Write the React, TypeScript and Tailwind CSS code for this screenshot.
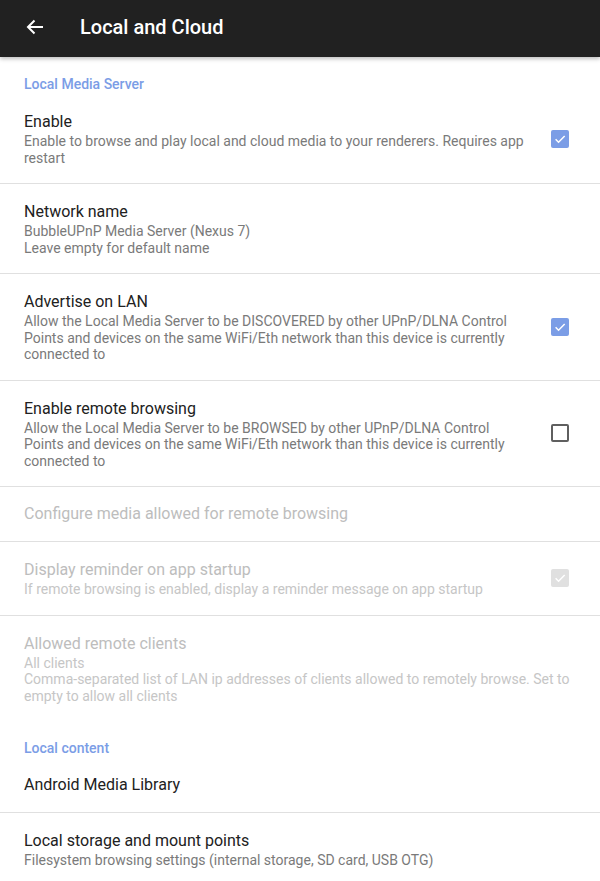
import React from 'react';

type Item = {
  title: string;
  lines?: string[];
  check?: 'on' | 'off';
  disabled?: boolean;
  divider?: boolean;
};

const Check = ({ state, disabled }: { state: 'on' | 'off'; disabled?: boolean }) => {
  if (state === 'off') {
    return <div className="w-[18px] h-[18px] rounded-[2px] border-2 border-[#5f5f5f]" />;
  }
  return (
    <div
      className={`w-[18px] h-[18px] rounded-[2px] flex items-center justify-center ${
        disabled ? 'bg-[#e0e0e0]' : 'bg-[#7b9de6]'
      }`}
    >
      <svg width="14" height="14" viewBox="0 0 24 24" fill="none">
        <path d="M4.5 12.5l5 5L20 7" stroke="white" strokeWidth="2.6" />
      </svg>
    </div>
  );
};

const Row = ({ item }: { item: Item }) => {
  const single = !item.lines;
  return (
    <div
      className={`flex items-center pl-6 ${item.check ? 'pr-[31px]' : 'pr-5'} ${single ? 'py-4' : 'py-[17px]'} ${
        item.divider ? 'border-b border-[#e0e0e0]' : ''
      }`}
    >
      <div className="flex-1 min-w-0">
        <div
          className={`text-[16px] leading-[22px] ${item.disabled ? 'text-[#bdbdbd]' : 'text-[#212121]'}`}
        >
          {item.title}
        </div>
        {item.lines?.map((l, i) => (
          <div
            key={i}
            className={`text-[14px] leading-[16.5px] ${item.disabled ? 'text-[#c6c6c6]' : 'text-[#7a7a7a]'}`}
          >
            {l}
          </div>
        ))}
      </div>
      {item.check && (
        <div className="ml-6 shrink-0">
          <Check state={item.check} disabled={item.disabled} />
        </div>
      )}
    </div>
  );
};

const Section = ({ label }: { label: string }) => (
  <div className="pl-6 pt-[17px] text-[14px] leading-[20px] font-medium text-[#7b9de6]">{label}</div>
);

const serverItems: Item[] = [
  {
    title: 'Enable',
    lines: ['Enable to browse and play local and cloud media to your renderers. Requires app restart'],
    check: 'on',
    divider: true,
  },
  {
    title: 'Network name',
    lines: ['BubbleUPnP Media Server (Nexus 7)', 'Leave empty for default name'],
    divider: true,
  },
  {
    title: 'Advertise on LAN',
    lines: [
      'Allow the Local Media Server to be DISCOVERED by other UPnP/DLNA Control Points and devices on the same WiFi/Eth network than this device is currently connected to',
    ],
    check: 'on',
    divider: true,
  },
  {
    title: 'Enable remote browsing',
    lines: [
      'Allow the Local Media Server to be BROWSED by other UPnP/DLNA Control Points and devices on the same WiFi/Eth network than this device is currently connected to',
    ],
    check: 'off',
    divider: true,
  },
  { title: 'Configure media allowed for remote browsing', disabled: true, divider: true },
  {
    title: 'Display reminder on app startup',
    lines: ['If remote browsing is enabled, display a reminder message on app startup'],
    check: 'on',
    disabled: true,
    divider: true,
  },
  {
    title: 'Allowed remote clients',
    lines: [
      'All clients',
      'Comma-separated list of LAN ip addresses of clients allowed to remotely browse. Set to empty to allow all clients',
    ],
    disabled: true,
  },
];

const contentItems: Item[] = [
  { title: 'Android Media Library', divider: true },
  {
    title: 'Local storage and mount points',
    lines: ['Filesystem browsing settings (internal storage, SD card, USB OTG)'],
  },
];

export default function App() {
  return (
    <div className="w-[600px] h-[881px] overflow-hidden bg-white" style={{ fontFamily: 'Roboto, "Noto Sans", sans-serif' }}>
      <div className="relative z-10 h-[57px] pb-[3px] bg-[#212121] flex items-center shadow-[0_2px_4px_rgba(0,0,0,0.25)]">
        <div className="w-[80px] flex justify-center pr-[10px]">
          <svg width="24" height="24" viewBox="0 0 24 24" fill="none">
            <path d="M20 12H5M11.5 5.5L5 12l6.5 6.5" stroke="white" strokeWidth="2" />
          </svg>
        </div>
        <div className="text-white text-[20px] font-medium">Local and Cloud</div>
      </div>
      <Section label="Local Media Server" />
      {serverItems.map((it, i) => (
        <Row key={i} item={it} />
      ))}
      <Section label="Local content" />
      {contentItems.map((it, i) => (
        <Row key={i} item={it} />
      ))}
    </div>
  );
}
